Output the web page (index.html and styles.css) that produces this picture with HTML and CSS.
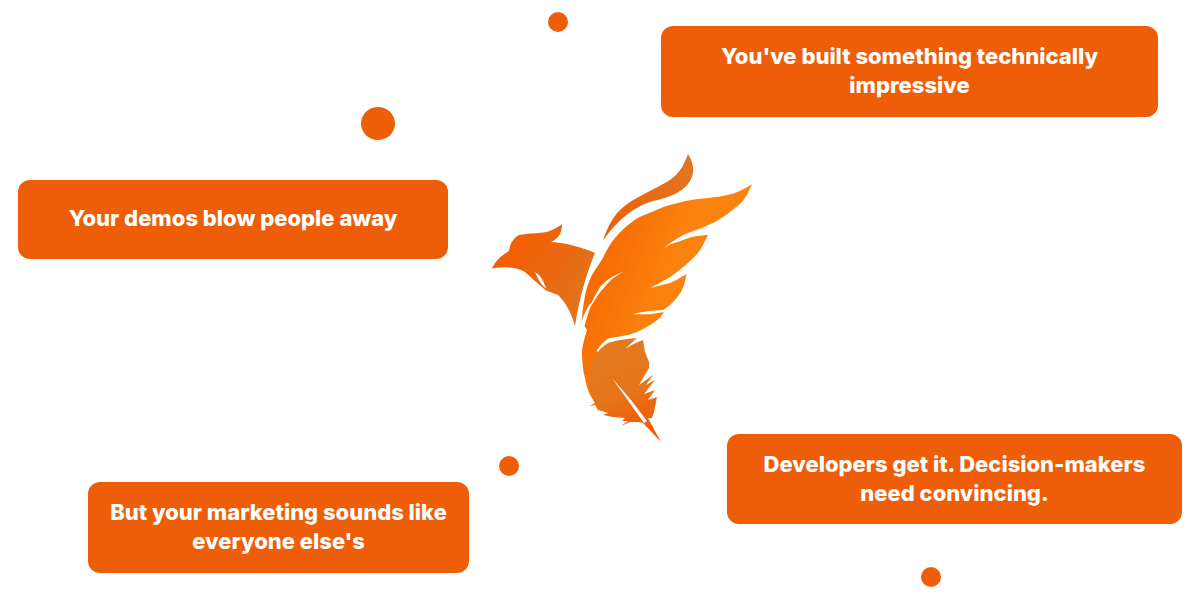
FILE: index.html
```html
<!DOCTYPE html>
<html lang="en">
<head>
    <meta charset="UTF-8">
    <meta name="viewport" content="width=device-width, initial-scale=1.0">
    <title>Phoenix</title>
    <link rel="stylesheet" href="styles.css">
</head>
<body>
    <div class="canvas">
        <span class="dot dot-top"></span>
        <span class="dot dot-big"></span>
        <span class="dot dot-mid"></span>
        <span class="dot dot-low"></span>

        <div class="card card-built">You've built something technically<br>impressive</div>
        <div class="card card-demos">Your demos blow people away</div>
        <div class="card card-marketing">But your marketing sounds like<br>everyone else's</div>
        <div class="card card-devs">Developers get it. Decision-makers<br>need convincing.</div>

        <svg class="phoenix" viewBox="480 145 280 305" width="280" height="305" aria-label="Phoenix logo">
            <defs>
                <linearGradient id="birdFill" x1="500" y1="240" x2="590" y2="300" gradientUnits="userSpaceOnUse">
                    <stop offset="0.25" stop-color="#f06005"/>
                    <stop offset="1" stop-color="#e0751f"/>
                </linearGradient>
                <linearGradient id="crestFill" x1="610" y1="235" x2="690" y2="170" gradientUnits="userSpaceOnUse">
                    <stop offset="0" stop-color="#ee5f0a"/>
                    <stop offset="1" stop-color="#e17520"/>
                </linearGradient>
                <linearGradient id="wingFill" x1="595" y1="265" x2="675" y2="295" gradientUnits="userSpaceOnUse">
                    <stop offset="0" stop-color="#f76a02"/>
                    <stop offset="0.75" stop-color="#fa800c"/>
                    <stop offset="1" stop-color="#f9830f"/>
                </linearGradient>
                <linearGradient id="tailFill" x1="610" y1="345" x2="640" y2="425" gradientUnits="userSpaceOnUse">
                    <stop offset="0" stop-color="#e27a20"/>
                    <stop offset="0.6" stop-color="#e67418"/>
                    <stop offset="1" stop-color="#ee5f07"/>
                </linearGradient>
            </defs>
            <!-- head and body -->
            <path fill="url(#birdFill)" fill-rule="evenodd" d="M492 268.5C495 262 499 257 509 251C510 245 512 239 519 235C527 233 545 234 552 230C556 228 560 226 562 224C562 231 560 238 551 242C566 243 582 247 595 253C586 275 579 300 575 326C572 315 567 304 558 295L546 290.5L535 281L525 272C515 266 503 267 492 268.5ZM535 272C540 275 543 279 546 288.5C541 285 538 279 535 272Z"/>
            <!-- crest feather -->
            <path fill="url(#crestFill)" d="M688 154C692 160 694 168 693 173C691 183 684 190 673 195C664 199 655 200 647 203C633 208 615 222 603 241C606 231 611 219 620 210C632 198 652 191 670 180C679 174 684 165 688 154Z"/>
            <!-- main wing -->
            <path fill="url(#wingFill)" d="M752 184.3C746 188 739 192 732 194C724 196 716 197 708 198C698 199 688 200 678 203C668 205 660 208 652 212C644 215 638 217 632 222C625 227 620 232 615 238C610 244 606 251 603 258C599 264 595 270 592 275C588 283 586 290 585 296C583 306 582 315 581.5 325C582 320 583 316 585 313C587 308 589 305 592 302C594 297 597 292 600 287C604 283 608 279 612 277C616 275 619 273 623 272C618 275 614 277 610 281C606 285 602 290 598 295C595 300 592 304 590 308C588 314 586 320 584.5 326L587 330C585 336 584 340 583 345C582 349 582 352 582 355C582.5 364 583 371 585 378C586 385 588 390 590 395L595 403L600 403L600 380L597 350L598 349C601 344 605 340 610 338C617 337 622 336 628 335C634 333 640 331 645 328C650 325 655 322 660 318L664 312L650 314.3L633 314.3C640 312 646 311 663 310C668 307 671 304 673 302C677 298 680 294 682 290C684 286 685 281 686.7 274C680 278 675 281 670 283C663 285 657 286 650 288C657 284 664 281 670 277C676 273 682 268 688 263C694 258 699 252 702 247L708 235C702 235 697 236 692 237C687 238 683 240 678 242C673 243 668 245 664 248C667 245 671 242 675 240C679 237 683 235 688 233C697 230 706 226 715 222C722 218 729 213 735 208C741 204 745 198 748 193Z"/>
            <!-- tail feather -->
            <path fill="url(#tailFill)" d="M595 355C599 350 603 346 608 343C617 340 627 339 637 338L625 349C631 345 637 342 643 340L645 352L649 362L649 368L639 385L653 375L646 385L655 380L644 394L655 390L648 400L657 397L654 412L652 418L648 418L661 442L643 423L639 422L630 422L621 426L628 421L622 421L625 418L613 417L603 415L608 413L598 410L595 405L589 406L595 403C592 398 590 390 590 378C589.5 370 591 362 595 355Z"/>
            <path fill="#fff" d="M612 378L631 400L647 421L644 423L634 409Z"/>
        </svg>
    </div>
</body>
</html>
```
FILE: styles.css
```css
* {
    box-sizing: border-box;
}
html, body {
    margin: 0;
    padding: 0;
    height: 100vh;
    overflow: hidden;
    background-color: #fff;
}
body {
    font-family: 'Inter', 'Liberation Sans', sans-serif;
    color: #fff;
}
.canvas {
    position: relative;
    width: 1200px;
    height: 600px;
}
.card {
    position: absolute;
    display: flex;
    align-items: center;
    justify-content: center;
    padding-bottom: 2px;
    text-align: center;
    background-color: #ee5e09;
    border-radius: 12px;
    font-size: 22px;
    font-weight: 800;
    line-height: 29px;
}
.card-built { left: 661px; top: 26px; width: 497px; height: 91px; }
.card-demos { left: 18px; top: 180px; width: 430px; height: 79px; }
.card-marketing { left: 88px; top: 482px; width: 381px; height: 91px; }
.card-devs { left: 727px; top: 434px; width: 455px; height: 90px; padding-bottom: 0; }
.dot {
    position: absolute;
    border-radius: 50%;
    background-color: #ee5e09;
}
.dot-top { left: 548px; top: 12px; width: 20px; height: 20px; }
.dot-big { left: 361px; top: 107px; width: 34px; height: 33px; }
.dot-mid { left: 499px; top: 456px; width: 20px; height: 20px; }
.dot-low { left: 921px; top: 567px; width: 20px; height: 20px; }
.phoenix {
    position: absolute;
    left: 480px;
    top: 145px;
}
```
